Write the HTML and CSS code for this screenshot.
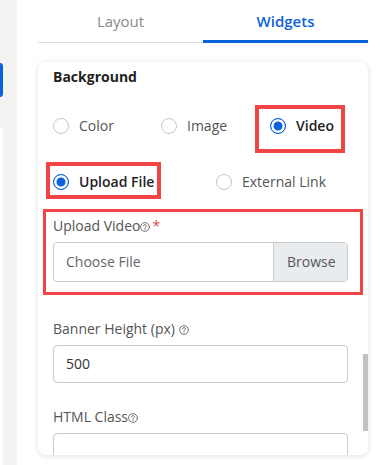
FILE: index.html
```html
<!DOCTYPE html>
<html lang="en">
<head>
  <meta charset="UTF-8">
  <meta name="viewport" content="width=device-width, initial-scale=1.0">
  <title>Widgets</title>
  <link rel="stylesheet" href="styles.css">
</head>
<body>
  <div class="rail">
    <div class="rail-tab"></div>
    <div class="rail-card"></div>
  </div>
  <div class="panel">
    <div class="tabs">
      <div class="tab">Layout</div>
      <div class="tab active">Widgets</div>
    </div>
    <div class="card">
      <div class="heading">Background</div>
      <div class="radios three">
        <label class="radio"><span class="dot"></span>Color</label>
        <label class="radio"><span class="dot"></span>Image</label>
        <label class="radio on mark-video"><span class="dot"></span>Video</label>
      </div>
      <div class="radios two">
        <label class="radio on mark-upload"><span class="dot"></span>Upload File</label>
        <label class="radio"><span class="dot"></span>External Link</label>
      </div>
      <div class="field mark-field">
        <div class="label">Upload Video<svg class="help" viewBox="0 0 10 10"><circle cx="5" cy="5" r="4.4"/><path d="M3.6 3.9a1.4 1.4 0 1 1 2 1.3c-.4.2-.6.5-.6.9v.3"/><circle class="pt" cx="5" cy="7.5" r=".55"/></svg><span class="req">*</span></div>
        <div class="file">
          <span class="file-name">Choose File</span>
          <span class="file-btn">Browse</span>
        </div>
      </div>
      <div class="field gap-a">
        <div class="label">Banner Height (px) <svg class="help" viewBox="0 0 10 10"><circle cx="5" cy="5" r="4.4"/><path d="M3.6 3.9a1.4 1.4 0 1 1 2 1.3c-.4.2-.6.5-.6.9v.3"/><circle class="pt" cx="5" cy="7.5" r=".55"/></svg></div>
        <div class="input">500</div>
      </div>
      <div class="field gap-b">
        <div class="label">HTML Class<svg class="help" viewBox="0 0 10 10"><circle cx="5" cy="5" r="4.4"/><path d="M3.6 3.9a1.4 1.4 0 1 1 2 1.3c-.4.2-.6.5-.6.9v.3"/><circle class="pt" cx="5" cy="7.5" r=".55"/></svg></div>
        <div class="input tall"></div>
      </div>
      <div class="thumb"></div>
    </div>
  </div>
</body>
</html>
```

FILE: styles.css
```css
body { margin: 0; width: 382px; height: 465px; overflow: hidden; display: flex; background: #ffffff; font-family: "Open Sans", "Liberation Sans", sans-serif; font-size: 14px; color: #555555; }
.rail { width: 17px; flex: none; background: #f3f3f3; display: flex; flex-direction: column; }
.rail-tab { margin-top: 63px; width: 3px; height: 34px; background: #0b62dd; border-radius: 0 3px 3px 0; }
.rail-card { margin-top: 30px; width: 3px; flex: 1; background: #ffffff; border-radius: 0 4px 0 0; }
.panel { flex: 1; padding: 0 14px 0 21px; }
.tabs { display: flex; height: 43px; }
.tab { flex: 1; box-sizing: border-box; text-align: center; padding-top: 10px; line-height: 22px; font-size: 15px; color: #8a8a8a; border-bottom: 1px solid #dddddd; }
.tab.active { color: #0b62dd; font-weight: 600; border-bottom: 3px solid #0b62dd; }
.card { position: relative; margin-top: 19px; height: 393px; box-sizing: border-box; padding: 5px 20px 0 15px; border-radius: 8px; background: #ffffff; box-shadow: 0 1px 6px rgba(0, 0, 0, 0.12); overflow: hidden; }
.heading { line-height: 20px; font-weight: 700; color: #222222; }
.radios { display: grid; line-height: 20px; }
.radios.three { margin-top: 29px; grid-template-columns: 108px 109px auto; }
.radios.two { margin-top: 36px; grid-template-columns: 163px auto; }
.radio { position: relative; display: flex; align-items: center; gap: 10px; color: #555555; justify-self: start; }
.dot { width: 14px; height: 14px; border: 1px solid #c6c6c6; border-radius: 50%; background: #ffffff; }
.radio.on { color: #222222; font-weight: 600; }
.radio.on .dot { border-color: #0b62dd; background: #0b62dd; box-shadow: inset 0 0 0 2.5px #ffffff; }
.mark-video::after, .mark-upload::after, .mark-field::after { content: ""; position: absolute; border: 4px solid #f24444; box-sizing: border-box; pointer-events: none; }
.mark-video::after { left: -15px; top: -11px; width: 90px; height: 48px; }
.mark-upload::after { left: -7px; top: -10px; width: 115px; height: 37px; }
.field { position: relative; }
.mark-field { margin-top: 24px; }
.mark-field::after { left: -10px; top: -7px; width: 320px; height: 86px; border-width: 3px; }
.gap-a { margin-top: 37px; }
.gap-b { margin-top: 24px; }
.label { line-height: 20px; color: #555555; }
.help { width: 10px; height: 10px; vertical-align: -1px; fill: none; stroke: #666666; stroke-width: 0.9; stroke-linecap: round; }
.help .pt { fill: #666666; stroke: none; }
.req { color: #e8474c; margin-left: 2px; }
.file { margin-top: 6px; height: 40px; box-sizing: border-box; display: flex; border: 1px solid #cccccc; border-radius: 4px; overflow: hidden; }
.file-name { flex: 1; padding-left: 12px; line-height: 38px; color: #666666; }
.file-btn { width: 74px; box-sizing: border-box; padding-left: 13px; line-height: 38px; background: #e9ecef; border-left: 1px solid #cccccc; color: #555555; }
.input { margin-top: 6px; height: 38px; box-sizing: border-box; border: 1px solid #cccccc; border-radius: 4px; padding-left: 12px; line-height: 36px; color: #333333; }
.input.tall { height: 40px; }
.thumb { position: absolute; right: 0; top: 292px; width: 5px; height: 77px; background: #c1c1c1; }
```
